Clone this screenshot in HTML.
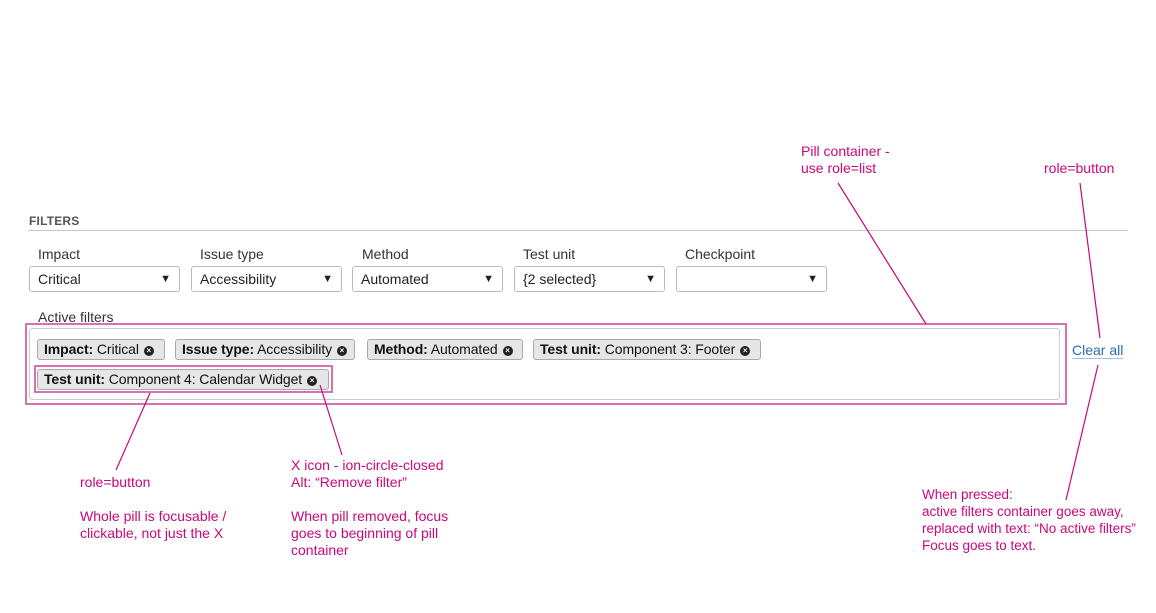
<!DOCTYPE html>
<html><head><meta charset="utf-8"><style>
body{margin:0;width:1156px;height:613px;background:#fff;position:relative;font-family:"Liberation Sans",sans-serif;overflow:hidden}
.a{position:absolute;white-space:nowrap}
.lbl{font-size:14px;color:#333}
.sel{position:absolute;top:266px;width:149px;height:24px;border:1px solid #bbb;border-radius:3px;font-size:14px;color:#222;line-height:25px;box-sizing:content-box}
.sel span{position:absolute;left:8px}
.sel i{position:absolute;right:8px;top:0;font-style:normal;font-size:11px}
.pill{position:absolute;height:21px;background:#e6e6e6;border:1px solid #aaa;border-radius:3px;font-size:14px;line-height:19px;color:#111;padding-left:6px;box-sizing:border-box;white-space:nowrap;letter-spacing:-0.1px}
.pill b{font-weight:bold}
.x{display:inline-block;position:relative;top:-1px;margin-left:5px;width:10px;height:10px;border-radius:50%;background:#222;color:#fff;font-size:8px;line-height:10px;text-align:center;font-weight:bold;letter-spacing:0}
.m{position:absolute;color:#c8087a;font-size:14px;line-height:17px;white-space:nowrap}
</style></head><body>
<div class="a" style="left:29px;top:214px;font-size:12px;font-weight:bold;color:#555;letter-spacing:.2px">FILTERS</div>
<div class="a" style="left:28px;top:230px;width:1100px;height:1px;background:#c8c8c8"></div>
<div class="a lbl" style="left:38px;top:246px">Impact</div>
<div class="a lbl" style="left:200px;top:246px">Issue type</div>
<div class="a lbl" style="left:362px;top:246px">Method</div>
<div class="a lbl" style="left:523px;top:246px">Test unit</div>
<div class="a lbl" style="left:685px;top:246px">Checkpoint</div>
<div class="sel" style="left:29px"><span>Critical</span><i>▼</i></div>
<div class="sel" style="left:191px"><span>Accessibility</span><i>▼</i></div>
<div class="sel" style="left:352px"><span>Automated</span><i>▼</i></div>
<div class="sel" style="left:514px"><span>{2 selected}</span><i>▼</i></div>
<div class="sel" style="left:676px"><span></span><i>▼</i></div>
<div class="a lbl" style="left:38px;top:309px">Active filters</div>
<div class="a" style="left:25px;top:323px;width:1042px;height:82px;border:2px solid #d872ae;box-sizing:border-box"></div>
<div class="a" style="left:29px;top:328px;width:1031px;height:72px;border:1px solid #ccc;border-radius:3px;box-sizing:border-box"></div>
<div class="pill" style="left:37px;top:339px;width:128px"><b>Impact:</b> Critical<span class="x">×</span></div>
<div class="pill" style="left:175px;top:339px;width:180px"><b>Issue type:</b> Accessibility<span class="x">×</span></div>
<div class="pill" style="left:367px;top:339px;width:156px"><b>Method:</b> Automated<span class="x">×</span></div>
<div class="pill" style="left:533px;top:339px;width:228px"><b>Test unit:</b> Component 3: Footer<span class="x">×</span></div>
<div class="a" style="left:34px;top:365px;width:299px;height:28px;border:2px solid #d872ae;box-sizing:border-box"></div>
<div class="pill" style="left:37px;top:369px;width:292px"><b>Test unit:</b> Component 4: Calendar Widget<span class="x">×</span></div>
<div class="a" style="left:1072px;top:342px;font-size:14px;color:#2a6db5;border-bottom:1px solid #9cc0e4;line-height:16px">Clear all</div>
<svg class="a" style="left:0;top:0" width="1156" height="613"><g stroke="#c8087a" stroke-width="1.2" fill="none">
<line x1="838" y1="183" x2="926" y2="324"/><line x1="1080" y1="183" x2="1100" y2="338"/><line x1="1098" y1="365" x2="1066" y2="500"/><line x1="150" y1="393" x2="116" y2="470"/><line x1="320" y1="385" x2="342" y2="455"/></g></svg>
<div class="m" style="left:801px;top:143px">Pill container -<br>use role=list</div>
<div class="m" style="left:1044px;top:160px">role=button</div>
<div class="m" style="left:80px;top:474px">role=button</div>
<div class="m" style="left:80px;top:508px">Whole pill is focusable /<br>clickable, not just the X</div>
<div class="m" style="left:291px;top:457px">X icon - ion-circle-closed<br>Alt: “Remove filter”</div>
<div class="m" style="left:291px;top:508px">When pill removed, focus<br>goes to beginning of pill<br>container</div>
<div class="m" style="left:922px;top:486px;font-size:13.5px">When pressed:<br>active filters container goes away,<br>replaced with text: “No active filters”<br>Focus goes to text.</div>
</body></html>
